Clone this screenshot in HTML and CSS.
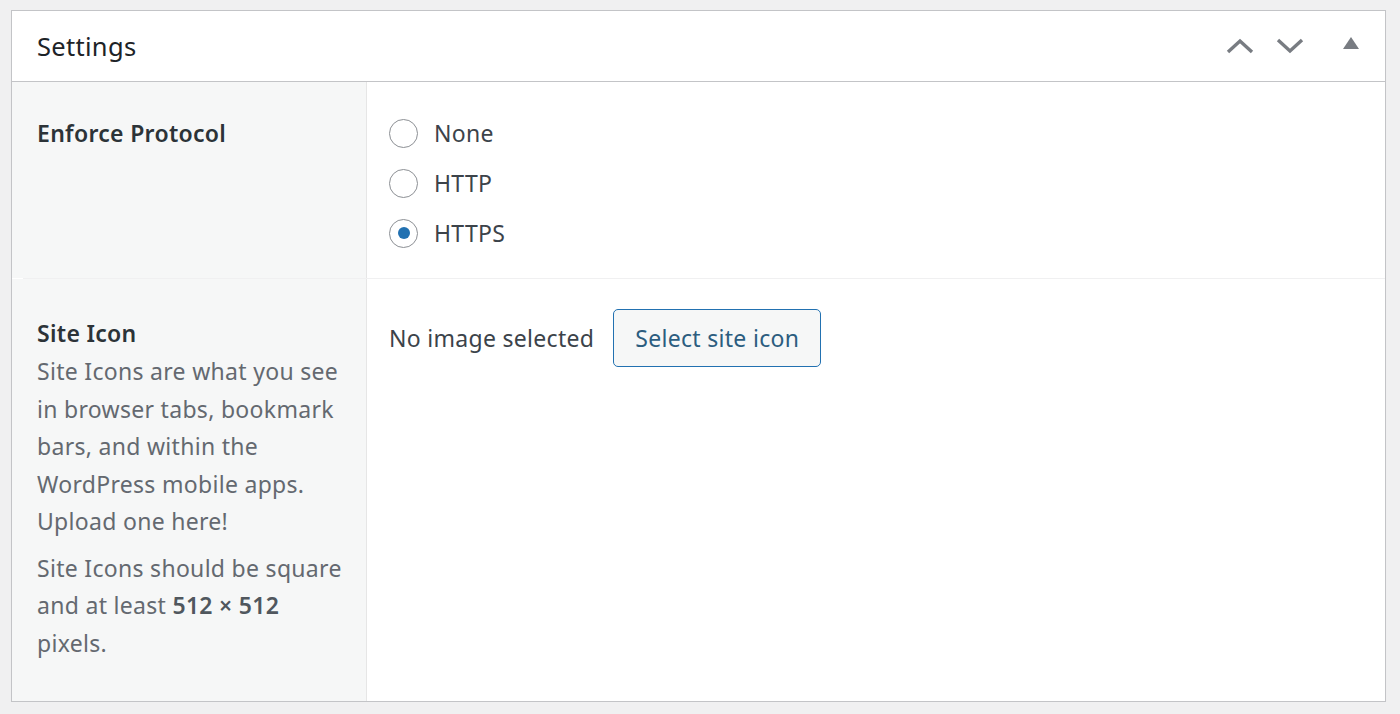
FILE: index.html
```html
<!DOCTYPE html>
<html lang="en">
<head>
<meta charset="utf-8">
<title>Settings</title>
<link rel="stylesheet" href="styles.css">
</head>
<body>
<div class="postbox">
  <div class="postbox-header">
    <h2 class="hndle">Settings</h2>
    <div class="handle-actions">
      <button class="handle-btn" aria-label="Move up">
        <svg width="28" height="18" viewBox="0 0 28 18"><path d="M2 15 L14 4 L26 15" fill="none" stroke="#787c82" stroke-width="3.4"/></svg>
      </button>
      <button class="handle-btn" aria-label="Move down">
        <svg width="28" height="18" viewBox="0 0 28 18"><path d="M2 3 L14 14 L26 3" fill="none" stroke="#787c82" stroke-width="3.4"/></svg>
      </button>
      <button class="handle-btn toggle" aria-label="Toggle panel">
        <svg width="18" height="14" viewBox="0 0 18 14"><path d="M1 13 L9 1 L17 13 Z" fill="#787c82"/></svg>
      </button>
    </div>
  </div>
  <div class="form-table">
    <div class="row row-protocol">
      <div class="th"><span class="label">Enforce Protocol</span></div>
      <div class="td">
        <label class="radio"><span class="circle"></span>None</label>
        <label class="radio"><span class="circle"></span>HTTP</label>
        <label class="radio"><span class="circle checked"></span>HTTPS</label>
      </div>
    </div>
    <div class="row row-icon">
      <div class="th">
        <span class="label">Site Icon</span>
        <p class="desc">Site Icons are what you see in browser tabs, bookmark bars, and within the WordPress mobile apps. Upload one here!</p>
        <p class="desc">Site Icons should be square and at least <strong>512&nbsp;×&nbsp;512</strong> pixels.</p>
      </div>
      <div class="td icon-td">
        <span class="noimg">No image selected</span>
        <button class="button">Select site icon</button>
      </div>
    </div>
  </div>
</div>
</body>
</html>
```

FILE: styles.css
```css
html, body {
  margin: 0;
  padding: 0;
  background: #f0f0f1;
  font-family: "Noto Sans", "Open Sans", sans-serif;
}
.postbox {
  margin: 10px 0 0 11px;
  width: 1373px;
  border: 1px solid #c3c4c7;
  background: #fff;
  box-shadow: 0 1px 1px rgba(0,0,0,0.04);
}
.postbox-header {
  height: 70px;
  border-bottom: 1px solid #c3c4c7;
  display: flex;
  align-items: center;
  justify-content: space-between;
  padding: 0 0 0 25px;
}
.hndle {
  margin: 0;
  font-size: 25.5px;
  font-weight: 400;
  color: #1d2327;
  letter-spacing: 0.3px;
}
.handle-actions {
  display: flex;
  align-items: center;
  margin-right: 25px;
}
.handle-btn {
  border: 0;
  background: none;
  padding: 0;
  margin: 0 0 0 22px;
  display: flex;
  align-items: center;
  justify-content: center;
  width: 28px;
  height: 28px;
}
.handle-btn.toggle {
  margin-left: 38px;
  width: 18px;
  margin-top: -6px;
}
.form-table {
  display: flex;
  flex-direction: column;
}
.row {
  display: flex;
}
.row-protocol {
  height: 196px;
  border-bottom: 1px solid #f0f0f1;
  margin-left: 11px;
}
.row-protocol .th {
  margin-left: -11px;
  padding-top: 37px;
}
.row-icon {
  height: 422px;
}
.th {
  width: 306px;
  padding: 35px 23px 0 25px;
  background: #f6f7f7;
  border-right: 1px solid #e6e6e6;
  color: #1d2327;
  flex-shrink: 0;
}
.label {
  display: block;
  font-size: 23px;
  font-weight: 600;
  color: #2c3338;
  line-height: 28px;
  letter-spacing: 0.3px;
}
.td {
  flex: 1;
  padding: 26px 0 0 22px;
}
.radio {
  display: flex;
  align-items: center;
  height: 50px;
  font-size: 23px;
  letter-spacing: 0.3px;
  color: #3c434a;
}
.circle {
  width: 27px;
  height: 27px;
  border: 1.5px solid #8c8f94;
  border-radius: 50%;
  margin-right: 16px;
  display: flex;
  align-items: center;
  justify-content: center;
  background: #fff;
}
.circle.checked::after {
  content: "";
  width: 12px;
  height: 12px;
  border-radius: 50%;
  background: #2271b1;
}
.row-icon .th {
  padding-top: 40px;
}
.desc {
  margin: 6px 0 0;
  font-size: 23px;
  line-height: 37.5px;
  letter-spacing: 0.3px;
  color: #646970;
}
.desc + .desc {
  margin-top: 9px;
}
.desc strong {
  color: #50575e;
  font-weight: 600;
}
.icon-td {
  display: flex;
  align-items: flex-start;
  padding-top: 30px;
}
.noimg {
  font-size: 23px;
  letter-spacing: 0.3px;
  color: #3c434a;
  line-height: 58px;
  margin-right: 19px;
}
.button {
  height: 58px;
  padding: 0 21px;
  border: 1px solid #2271b1;
  border-radius: 5px;
  background: #f6f7f7;
  color: #2c5d7f;
  font-family: "Noto Sans", "Open Sans", sans-serif;
  font-size: 23px;
  letter-spacing: 0.3px;
}
```
